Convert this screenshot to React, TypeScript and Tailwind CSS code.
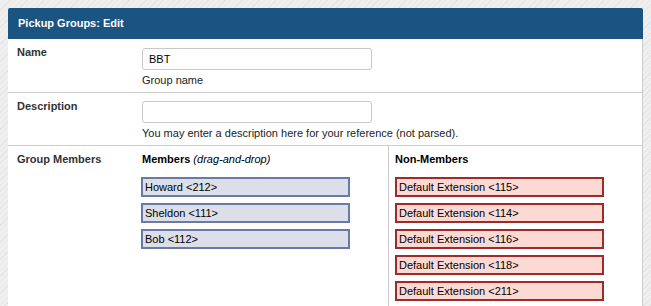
const members = ["Howard <212>", "Sheldon <111>", "Bob <112>"];
const nonMembers = [
  "Default Extension <115>",
  "Default Extension <114>",
  "Default Extension <116>",
  "Default Extension <118>",
  "Default Extension <211>",
];

function Row({ label, children, last }: { label: string; children: React.ReactNode; last?: boolean }) {
  return (
    <div className={`flex ${last ? "" : "border-b border-[#cccccc]"}`}>
      <div className="w-[134px] shrink-0 pl-[9px] pt-[6px] text-[11px] font-bold leading-[14px] text-[#333333]">
        {label}
      </div>
      <div className="flex-1">{children}</div>
    </div>
  );
}

export default function App() {
  return (
    <div
      className="h-[306px] w-full overflow-hidden bg-[#eeeeee] bg-[repeating-linear-gradient(135deg,#efefef_0px,#efefef_3px,#e5e5e5_3px,#e5e5e5_4px)] pl-[8px] pt-[8px] text-[#222222]"
      style={{ fontFamily: '"Liberation Sans", Arial, sans-serif' }}
    >
      <div className="w-[635px]">
        <div className="flex h-[31px] items-center rounded-t-[2px] bg-[#1b5480] px-[10px] text-[11px] font-bold text-white">
          Pickup Groups: Edit
        </div>
        <div className="h-[270px] border-r border-[#cccccc] bg-white">
          <Row label="Name">
            <div className="pt-[9px] pb-[5px]">
              <input
                defaultValue="BBT"
                className="block h-[22px] w-[230px] rounded-[3px] border border-[#c8c8c8] px-[6px] text-[11px] text-black outline-none"
              />
              <p className="mt-[3px] text-[11px] leading-[14px]">Group name</p>
            </div>
          </Row>
          <Row label="Description">
            <div className="pt-[8px] pb-[5px]">
              <input className="block h-[22px] w-[230px] rounded-[3px] border border-[#c8c8c8] px-[6px] text-[11px] outline-none" />
              <p className="mt-[3px] text-[11px] leading-[14px]">
                You may enter a description here for your reference (not parsed).
              </p>
            </div>
          </Row>
          <Row label="Group Members" last>
            <div className="flex h-[170px]">
              <div className="w-[247px] border-r border-[#cccccc] pt-[6px]">
                <h3 className="text-[11px] leading-[14px] text-black">
                  <span className="font-bold">Members</span> <em>(drag-and-drop)</em>
                </h3>
                <div className="mt-[11px] -ml-px flex flex-col gap-[6px]">
                  {members.map((m) => (
                    <div
                      key={m}
                      className="flex h-[20px] w-[209px] items-center border-2 border-[#6a7aa7] bg-[#dcdfe9] pl-[2px] text-[11px] text-black"
                    >
                      {m}
                    </div>
                  ))}
                </div>
              </div>
              <div className="flex-1 pl-[6px] pt-[6px]">
                <h3 className="text-[11px] font-bold leading-[14px] text-black">Non-Members</h3>
                <div className="mt-[11px] flex flex-col gap-[6px]">
                  {nonMembers.map((m) => (
                    <div
                      key={m}
                      className="flex h-[20px] w-[209px] items-center border-2 border-[#a0292a] bg-[#fdd9d3] pl-[2px] text-[11px] text-black"
                    >
                      {m}
                    </div>
                  ))}
                </div>
              </div>
            </div>
          </Row>
        </div>
      </div>
    </div>
  );
}
